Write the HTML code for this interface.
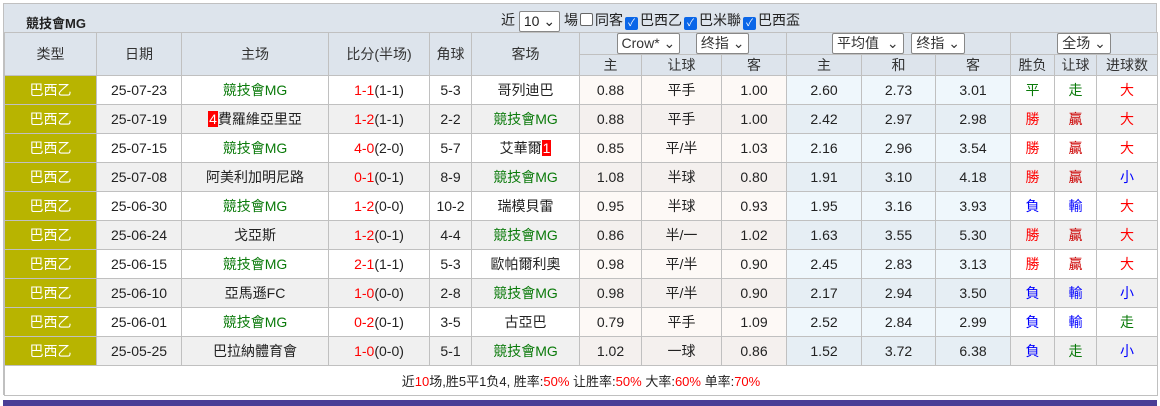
<!DOCTYPE html>
<html><head><meta charset="utf-8"><style>
body{margin:0;width:1160px;height:406px;background:#fff;font-family:"Liberation Sans","Noto Sans CJK SC",sans-serif;font-size:14px;color:#222;overflow:hidden;position:relative}
.wrap{position:absolute;left:3px;top:3px;width:1154px;height:392px;border:1px solid #c0c0c0;box-sizing:border-box;background:#dde4ec}
.title{position:absolute;left:0;top:0;width:1152px;height:30px}
.title b{position:absolute;left:22px;top:9px;font-size:13px}
.filt{position:absolute;left:497px;top:6px;font-size:14px;white-space:nowrap}
.sel{display:inline-block;border:1px solid #888;background:#fff;border-radius:2px;padding:0 4px;height:19px;line-height:19px;vertical-align:middle;font-size:14px}
.cb{display:inline-block;width:11px;height:11px;border:1px solid #666;border-radius:2px;background:#fff;vertical-align:-1px;margin:0 2px}
.cb.on{background:#0a66e8;border-color:#0a66e8;color:#fff;font-size:10px;line-height:11px;text-align:center}
table{position:absolute;left:0;top:28px;border-collapse:collapse;table-layout:fixed;width:1153px}
td{border:1px solid #c0c0c0;text-align:center;padding:0;white-space:nowrap;overflow:hidden}
.h td{background:#dde4ec;color:#333}
.d td{height:28px;background:#fff}
.d.g td{background:#f0f0f0}
.d td.o{background:#fdf9f6}.d.g td.o{background:#f4f0ee}
.d td.b{background:#eff7fc}.d.g td.b{background:#e6eef4}
.d td.t{background:#b8b400;color:#fff}
.gr{color:#0a7a0a}.r{color:#f00}.bl{color:#00f}.bn{color:#c00}
.bd{background:#f00;color:#fff;padding:0 1px}
.ft td{height:29px;background:#fff;font-size:13px}
.bar{position:absolute;left:3px;top:400px;width:1154px;height:6px;background:#4a3d96}
</style></head><body>
<div class="wrap">
<div class="title"><b>競技會MG</b>
<div class="filt">近 <span class="sel">10 ⌄</span> 場<span class="cb"></span>同客<span class="cb on">✓</span>巴西乙<span class="cb on">✓</span>巴米聯<span class="cb on">✓</span>巴西盃</div></div>
<table>
<colgroup><col style="width:92px"><col style="width:85px"><col style="width:147px"><col style="width:101px"><col style="width:42px"><col style="width:108px"><col style="width:62px"><col style="width:80px"><col style="width:65px"><col style="width:75px"><col style="width:74px"><col style="width:75px"><col style="width:44px"><col style="width:42px"><col style="width:61px"></colgroup>
<tr class="h" style="height:21px"><td rowspan="2">类型</td><td rowspan="2">日期</td><td rowspan="2">主场</td><td rowspan="2">比分(半场)</td><td rowspan="2">角球</td><td rowspan="2">客场</td>
<td colspan="3"><span class="sel">Crow* ⌄</span>&nbsp;&nbsp;&nbsp;&nbsp;<span class="sel">终指 ⌄</span></td>
<td colspan="3"><span class="sel">平均值 &nbsp;⌄</span>&nbsp;&nbsp;<span class="sel">终指 ⌄</span></td>
<td colspan="3"><span class="sel">全场 ⌄</span></td></tr>
<tr class="h" style="height:19px"><td>主</td><td>让球</td><td>客</td><td>主</td><td>和</td><td>客</td><td>胜负</td><td>让球</td><td>进球数</td></tr>
<tr class="d"><td class="t">巴西乙</td><td>25-07-23</td><td class="gr">競技會MG</td><td><span class="r">1-1</span>(1-1)</td><td>5-3</td><td>哥列迪巴</td><td class="o">0.88</td><td class="o">平手</td><td class="o">1.00</td><td class="b">2.60</td><td class="b">2.73</td><td class="b">3.01</td><td class="gr">平</td><td class="gr">走</td><td class="r">大</td></tr>
<tr class="d g"><td class="t">巴西乙</td><td>25-07-19</td><td><span class="bd">4</span>費羅維亞里亞</td><td><span class="r">1-2</span>(1-1)</td><td>2-2</td><td class="gr">競技會MG</td><td class="o">0.88</td><td class="o">平手</td><td class="o">1.00</td><td class="b">2.42</td><td class="b">2.97</td><td class="b">2.98</td><td class="r">勝</td><td class="bn">贏</td><td class="r">大</td></tr>
<tr class="d"><td class="t">巴西乙</td><td>25-07-15</td><td class="gr">競技會MG</td><td><span class="r">4-0</span>(2-0)</td><td>5-7</td><td>艾華爾<span class="bd">1</span></td><td class="o">0.85</td><td class="o">平/半</td><td class="o">1.03</td><td class="b">2.16</td><td class="b">2.96</td><td class="b">3.54</td><td class="r">勝</td><td class="bn">贏</td><td class="r">大</td></tr>
<tr class="d g"><td class="t">巴西乙</td><td>25-07-08</td><td>阿美利加明尼路</td><td><span class="r">0-1</span>(0-1)</td><td>8-9</td><td class="gr">競技會MG</td><td class="o">1.08</td><td class="o">半球</td><td class="o">0.80</td><td class="b">1.91</td><td class="b">3.10</td><td class="b">4.18</td><td class="r">勝</td><td class="bn">贏</td><td class="bl">小</td></tr>
<tr class="d"><td class="t">巴西乙</td><td>25-06-30</td><td class="gr">競技會MG</td><td><span class="r">1-2</span>(0-0)</td><td>10-2</td><td>瑞模貝雷</td><td class="o">0.95</td><td class="o">半球</td><td class="o">0.93</td><td class="b">1.95</td><td class="b">3.16</td><td class="b">3.93</td><td class="bl">負</td><td class="bl">輸</td><td class="r">大</td></tr>
<tr class="d g"><td class="t">巴西乙</td><td>25-06-24</td><td>戈亞斯</td><td><span class="r">1-2</span>(0-1)</td><td>4-4</td><td class="gr">競技會MG</td><td class="o">0.86</td><td class="o">半/一</td><td class="o">1.02</td><td class="b">1.63</td><td class="b">3.55</td><td class="b">5.30</td><td class="r">勝</td><td class="bn">贏</td><td class="r">大</td></tr>
<tr class="d"><td class="t">巴西乙</td><td>25-06-15</td><td class="gr">競技會MG</td><td><span class="r">2-1</span>(1-1)</td><td>5-3</td><td>歐帕爾利奧</td><td class="o">0.98</td><td class="o">平/半</td><td class="o">0.90</td><td class="b">2.45</td><td class="b">2.83</td><td class="b">3.13</td><td class="r">勝</td><td class="bn">贏</td><td class="r">大</td></tr>
<tr class="d g"><td class="t">巴西乙</td><td>25-06-10</td><td>亞馬遜FC</td><td><span class="r">1-0</span>(0-0)</td><td>2-8</td><td class="gr">競技會MG</td><td class="o">0.98</td><td class="o">平/半</td><td class="o">0.90</td><td class="b">2.17</td><td class="b">2.94</td><td class="b">3.50</td><td class="bl">負</td><td class="bl">輸</td><td class="bl">小</td></tr>
<tr class="d"><td class="t">巴西乙</td><td>25-06-01</td><td class="gr">競技會MG</td><td><span class="r">0-2</span>(0-1)</td><td>3-5</td><td>古亞巴</td><td class="o">0.79</td><td class="o">平手</td><td class="o">1.09</td><td class="b">2.52</td><td class="b">2.84</td><td class="b">2.99</td><td class="bl">負</td><td class="bl">輸</td><td class="gr">走</td></tr>
<tr class="d g"><td class="t">巴西乙</td><td>25-05-25</td><td>巴拉納體育會</td><td><span class="r">1-0</span>(0-0)</td><td>5-1</td><td class="gr">競技會MG</td><td class="o">1.02</td><td class="o">一球</td><td class="o">0.86</td><td class="b">1.52</td><td class="b">3.72</td><td class="b">6.38</td><td class="bl">負</td><td class="gr">走</td><td class="bl">小</td></tr>
<tr class="ft"><td colspan="15">近<span class="r">10</span>场,胜5平1负4, 胜率:<span class="r">50%</span> 让胜率:<span class="r">50%</span> 大率:<span class="r">60%</span> 单率:<span class="r">70%</span></td></tr>
</table>
</div>
<div class="bar"></div>
</body></html>
